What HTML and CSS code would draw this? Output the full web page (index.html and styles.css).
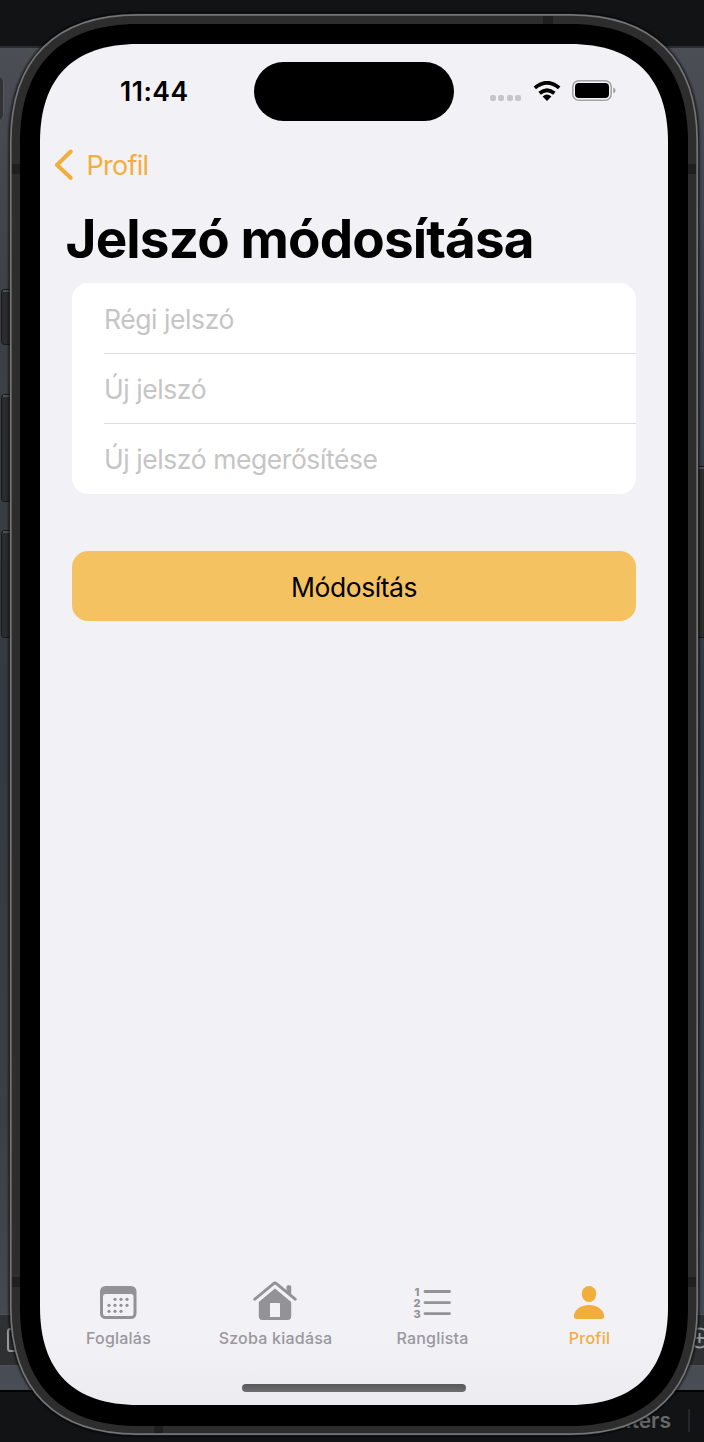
FILE: index.html
```
<!DOCTYPE html>
<html lang="hu">
<head>
<meta charset="utf-8">
<title>Jelszó módosítása</title>
<link rel="stylesheet" href="styles.css">
</head>
<body>
<div class="stage">
  <svg class="backdrop" viewBox="0 0 704 1442" aria-hidden="true">
    <defs>
      <linearGradient id="desk" x1="0" y1="0" x2="0" y2="1">
        <stop offset="0" stop-color="#4b4e55"/><stop offset=".2" stop-color="#3d4047"/>
        <stop offset=".5" stop-color="#343a41"/><stop offset=".8" stop-color="#3b3f46"/><stop offset="1" stop-color="#494d55"/>
      </linearGradient>
      <linearGradient id="panel" x1="0" y1="0" x2="0" y2="1">
        <stop offset="0" stop-color="#f2f1f6"/><stop offset=".95" stop-color="#f2f1f6"/><stop offset="1" stop-color="#ecebf0"/>
      </linearGradient>
      <filter id="shade" x="-5%" y="-5%" width="110%" height="110%"><feGaussianBlur stdDeviation="1.500"/></filter>
    </defs>
    <rect width="704" height="1442" fill="#111314"/>
    <rect y="46" width="704" height="1344" fill="url(#desk)"/>
    <rect y="46" width="704" height="2" fill="#2b2c2f"/>
    <rect y="1390" width="704" height="2" fill="#020202"/>
    <rect x="-20" y="75.500" width="23.500" height="46" rx="7" fill="#303236" stroke="#55575b"/>
    <rect x="-2" y="1314.500" width="708" height="51" fill="#2e3031" stroke="#505255"/>
    <rect x="8" y="1329" width="20" height="22" rx="2.500" fill="none" stroke="#97989a" stroke-width="2"/>
    <g fill="none" stroke="#97989a" stroke-width="2"><circle cx="699.500" cy="1338" r="9.500"/><path d="M694.500 1338h10M699.500 1333v10"/></g>
    <path d="M689 1409v23" stroke="#2c2e30" stroke-width="1.500"/>
    <text class="desk-label" x="671" y="1428" text-anchor="end">filters</text>
    <g fill="#2c2c2c" stroke="#15181b">
      <rect x="1.500" y="289.500" width="16" height="55" rx="3"/><rect x="1.500" y="394.500" width="16" height="107" rx="3"/>
      <rect x="1.500" y="530.500" width="16" height="107" rx="3"/><rect x="690" y="466.500" width="20" height="171"/>
    </g>
    <path d="M3 291h7M3 396h7M3 532h7M698 468h6" stroke="#5c5c5c" stroke-width="1.500"/>
    <path d="M10 142C10 59 55 14 138 14H570C653 14 698 59 698 142V1307C698 1390 653 1435 570 1435H138C55 1435 10 1390 10 1307Z" fill="#08090a" stroke="#08090a" stroke-width="2" filter="url(#shade)"/>
    <path d="M10.800 142C10.800 59 55 14.800 138 14.800H570C653 14.800 697.200 59 697.200 142V1307C697.200 1390 653 1434.200 570 1434.200H138C55 1434.200 10.800 1390 10.800 1307Z" fill="#2d2d2d" stroke="#747474" stroke-width="1.700"/>
    <path d="M12 164h8v10h-8zM688 164h8v10h-8zM12 1277h8v10h-8zM688 1277h8v10h-8zM543 16h10v8h-10zM154 1426h9v7h-9z" fill="#1f1f1f"/>
    <path d="M20 142C20 65 61 24 138 24H570C647 24 688 65 688 142V1308C688 1385 647 1426 570 1426H138C61 1426 20 1385 20 1308Z" fill="#000"/>
    <path d="M40 142C40 77.500 73.500 44 138 44H570C634.500 44 668 77.500 668 142V1307C668 1371.500 634.500 1405 570 1405H138C73.500 1405 40 1371.500 40 1307Z" fill="url(#panel)"/>
  </svg>

  <main class="screen">
    <header class="status">
      <span class="time">11:44</span>
      <span class="island"></span>
      <span class="signal"><i></i><i></i><i></i><i></i></span>
      <svg class="wifi" viewBox="0 0 28 20" aria-hidden="true">
        <path d="M1.800 6.900Q14-3.400 26.200 6.900M6.600 12.300Q14 6.200 21.400 12.300" fill="none" stroke="#000" stroke-width="3.700"/>
        <path d="M9.600 15.400Q14 11.800 18.400 15.400L14 20Z"/>
      </svg>
      <svg class="battery" viewBox="0 0 44 22" aria-hidden="true">
        <rect x=".8" y=".8" width="38.400" height="19.400" rx="6" fill="none" stroke="#a4a4a6" stroke-width="1.600"/>
        <rect x="3" y="3" width="34" height="15" rx="4"/>
        <path d="M41.300 7.500q2.200.9 2.200 3t-2.200 3z" fill="#99999c"/>
      </svg>
    </header>

    <a class="back">
      <svg class="chevron" viewBox="0 0 20 32" aria-hidden="true"><path d="M16.700 2.500 3 16 16.700 28.800" fill="none" stroke="#f2ae3c" stroke-width="4" stroke-linecap="round" stroke-linejoin="round"/></svg>
      <span>Profil</span>
    </a>
    <h1 class="title">Jelszó módosítása</h1>

    <section class="fields">
      <div class="field"><span>Régi jelszó</span></div>
      <div class="field"><span>Új jelszó</span></div>
      <div class="field"><span>Új jelszó megerősítése</span></div>
    </section>
    <button class="submit" type="button">Módosítás</button>

    <nav class="tabs">
      <a class="tab">
        <svg viewBox="0 0 48 44" aria-hidden="true">
          <rect x="6" y="6" width="36.500" height="33" rx="5.500" fill="#939297"/><rect x="9" y="14" width="30.500" height="22" rx="2.500" fill="#f2f1f6"/>
          <g fill="#939297"><circle cx="21" cy="19.300" r="1.600"/><circle cx="27" cy="19.300" r="1.600"/><circle cx="33" cy="19.300" r="1.600"/><circle cx="15" cy="25.300" r="1.600"/><circle cx="21" cy="25.300" r="1.600"/><circle cx="27" cy="25.300" r="1.600"/><circle cx="33" cy="25.300" r="1.600"/><circle cx="15" cy="31.300" r="1.600"/><circle cx="21" cy="31.300" r="1.600"/><circle cx="27" cy="31.300" r="1.600"/></g>
        </svg>
        <span>Foglalás</span>
      </a>
      <a class="tab">
        <svg viewBox="0 0 48 44" aria-hidden="true">
          <path d="M35.500 12V6.700Q35.500 5.200 37 5.200H38.700Q40.200 5.200 40.200 6.700V16Z" fill="#939297"/>
          <path d="M3.800 19.200 22.300 3.800Q24 2.400 25.700 3.800L44.200 19.200" fill="none" stroke="#939297" stroke-width="2.900" stroke-linecap="round" stroke-linejoin="round"/>
          <path fill-rule="evenodd" d="M24 8.600 40.200 22V36.300Q40.200 40 36.500 40H11.500Q7.800 40 7.800 36.300V22ZM19.700 23Q19 23 19 23.700V37H29V23.700Q29 23 28.300 23Z" fill="#939297"/>
        </svg>
        <span>Szoba kiadása</span>
      </a>
      <a class="tab">
        <svg viewBox="0 0 48 44" aria-hidden="true">
          <path d="M17 11.500H41.500M17 22.600H41.500M17 33.600H41.500" stroke="#939297" stroke-width="2.900" stroke-linecap="round"/>
          <g class="numerals"><text x="9" y="15.500">1</text><text x="9" y="26.500">2</text><text x="9" y="37.500">3</text></g>
        </svg>
        <span>Ranglista</span>
      </a>
      <a class="tab active">
        <svg viewBox="0 0 48 44" aria-hidden="true"><ellipse cx="24" cy="14" rx="7.300" ry="8" fill="#f2ae3c"/><path d="M11.500 39Q8.800 39 8.800 36.300C9 30.500 15 25 24 25S39 30.500 39.200 36.300Q39.200 39 36.500 39Z" fill="#f2ae3c"/></svg>
        <span>Profil</span>
      </a>
    </nav>
    <div class="home"></div>
  </main>
</div>
</body>
</html>
```
FILE: styles.css
```
* { box-sizing: border-box; }
body { margin: 0; font-family: Inter, "Liberation Sans", sans-serif; }
.stage { position: relative; width: 704px; height: 1442px; overflow: hidden; }
.backdrop { position: absolute; inset: 0; width: 704px; height: 1442px; }
.desk-label { font-size: 21px; font-weight: 600; fill: #66686a; }
.screen {
  position: relative; display: flex; flex-direction: column;
  width: 628px; height: 1361px; margin: 44px 40px 0;
}
.status { display: flex; height: 96px; padding-top: 18px; }
.time {
  width: 214px; padding: 13px 0 0 80px; line-height: 32px;
  font-size: 26.5px; font-weight: 600; letter-spacing: .5px; white-space: nowrap;
}
.island { width: 200px; height: 59px; border-radius: 30px; background: #000; }
.signal { display: flex; gap: 2.700px; margin: 33px 0 0 36px; }
.signal i { width: 5.800px; height: 5.800px; border-radius: 2px; background: #c6c5ca; }
.wifi { width: 28px; height: 20px; margin: 19px 0 0 12px; }
.battery { width: 44px; height: 22px; margin: 18px 0 0 11px; }
.back { display: flex; align-items: center; height: 50px; padding-left: 14px; gap: 12.500px; color: #f2ae3c; font-size: 27px; letter-spacing: -.75px; }
.chevron { width: 20px; height: 32px; }
.title { height: 93px; margin: 0; padding: 16px 0 0 25.500px; font-size: 53px; line-height: 66px; font-weight: 700; letter-spacing: -.85px; white-space: nowrap; }
.fields { margin: 0 32px; height: 210.500px; border-radius: 16px; background: #fff; color: #c5c5c5; font-size: 26.500px; letter-spacing: -.43px; }
.field { height: 70px; margin-left: 32px; line-height: 72px; white-space: nowrap; }
.field + .field { border-top: 1px solid #dcdcde; line-height: 70px; }
.submit {
  height: 70px; margin: 57px 32px 0; padding: 2px 0 0; border: 0; border-radius: 16px;
  background: #f5c261; color: #000; font-family: inherit; font-size: 26.500px; letter-spacing: -.45px;
}
.tabs { display: grid; grid-template-columns: repeat(4, 157px); margin-top: 659.500px; }
.tab { display: flex; flex-direction: column; align-items: center; color: #99989d; font-size: 16px; font-weight: 500; line-height: 22px; letter-spacing: .22px; }
.tab svg { display: block; width: 48px; height: 44px; margin: 0 1px 3px 0; }
.active { color: #f2ae3c; }
.numerals { font-size: 11px; font-weight: 800; fill: #939297; text-anchor: middle; letter-spacing: 0; }
.home { width: 224px; height: 8px; margin: 35px auto 0; border-radius: 4px; background: linear-gradient(#58585a, #6d6d70); }
```
